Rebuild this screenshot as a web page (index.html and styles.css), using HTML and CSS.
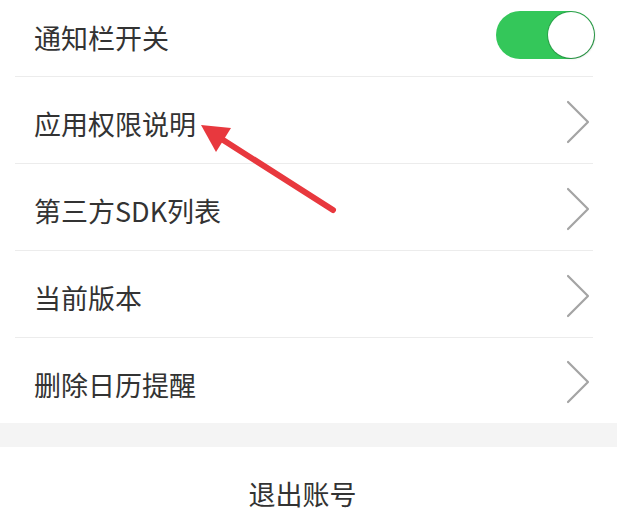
FILE: index.html
```html
<!DOCTYPE html>
<html lang="zh-CN">
<head>
    <meta charset="UTF-8">
    <meta name="viewport" content="width=device-width, initial-scale=1.0">
    <title>设置</title>
    <link rel="stylesheet" href="styles.css">
</head>
<body>
    <div class="settings">
        <!-- Setting rows -->
        <ul class="setting-list">
            <li class="setting-row setting-row--first">
                <span class="setting-label">通知栏开关</span>
                <span class="switch is-on"><span class="switch-knob"></span></span>
            </li>
            <li class="setting-row">
                <span class="setting-label">应用权限说明</span>
                <svg class="chevron" viewBox="0 0 24 44" aria-hidden="true"><polyline points="2,2 22,22 2,42"/></svg>
            </li>
            <li class="setting-row">
                <span class="setting-label">第三方SDK列表</span>
                <svg class="chevron" viewBox="0 0 24 44" aria-hidden="true"><polyline points="2,2 22,22 2,42"/></svg>
            </li>
            <li class="setting-row">
                <span class="setting-label">当前版本</span>
                <svg class="chevron" viewBox="0 0 24 44" aria-hidden="true"><polyline points="2,2 22,22 2,42"/></svg>
            </li>
            <li class="setting-row">
                <span class="setting-label">删除日历提醒</span>
                <svg class="chevron" viewBox="0 0 24 44" aria-hidden="true"><polyline points="2,2 22,22 2,42"/></svg>
            </li>
        </ul>

        <div class="section-gap"></div>

        <div class="logout">退出账号</div>

        <!-- Annotation arrow -->
        <svg class="annotation" viewBox="0 0 617 524" aria-hidden="true">
            <line x1="333" y1="210" x2="220" y2="138" stroke="#e8383e" stroke-width="6" stroke-linecap="round"/>
            <polygon points="201,125 231,128 216,152" fill="#e8383e"/>
        </svg>
    </div>
</body>
</html>
```

FILE: styles.css
```css
/* Base Styles */
* {
    box-sizing: border-box;
    margin: 0;
    padding: 0;
}

body {
    font-family: "Noto Sans CJK SC", "Noto Sans", sans-serif;
    background: #ffffff;
    color: #333333;
}

.settings {
    position: relative;
    width: 617px;
    height: 524px;
    overflow: hidden;
}

.setting-list {
    list-style: none;
}

.setting-row {
    display: flex;
    align-items: center;
    justify-content: space-between;
    height: 87px;
    margin: 0 24px 0 15px;
    padding-left: 19px;
    border-top: 1px solid #ececec;
}

.setting-row--first {
    height: 76px;
    border-top: none;
}

.setting-label {
    font-size: 27px;
    line-height: 34px;
    padding-top: 8px;
    color: #333333;
}

.setting-row--first .setting-label {
    padding-top: 0;
}

.setting-row:last-child {
    height: 86px;
}

/* Toggle switch */
.switch {
    position: relative;
    display: block;
    width: 99px;
    height: 48px;
    margin-right: -2px;
    margin-top: -6px;
    border-radius: 24px;
    background: #d8d8d8;
}

.switch.is-on {
    background: #34c75a;
}

.switch-knob {
    position: absolute;
    top: 1px;
    right: 1px;
    width: 46px;
    height: 46px;
    border-radius: 50%;
    background: #ffffff;
    box-shadow: 0 0 0 1px rgba(0, 0, 0, 0.18), 1px 1px 2px rgba(0, 0, 0, 0.15);
}

/* Chevron */
.chevron {
    width: 24px;
    height: 44px;
    margin-right: 3px;
    margin-top: 3px;
    fill: none;
    stroke: #a4a4a4;
    stroke-width: 2.2;
    stroke-linecap: round;
    stroke-linejoin: round;
}

.section-gap {
    height: 24px;
    background: #f4f4f4;
}

.logout {
    padding: 30px 12px 0 0;
    font-size: 27px;
    line-height: 34px;
    text-align: center;
    color: #333333;
}

.annotation {
    position: absolute;
    top: 0;
    left: 0;
    width: 617px;
    height: 524px;
    pointer-events: none;
}
```
